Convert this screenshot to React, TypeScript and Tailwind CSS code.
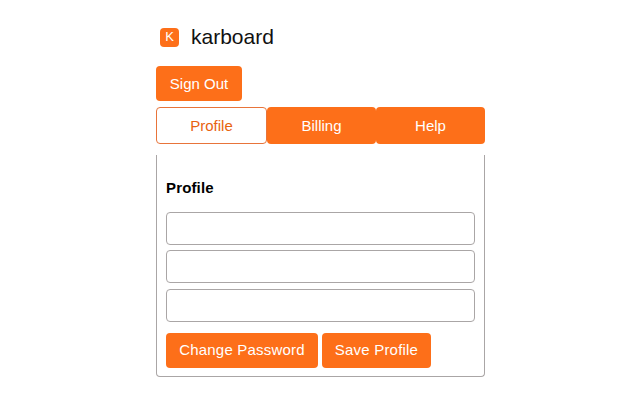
import React from 'react';

const Tab: React.FC<{ label: string; active?: boolean; className?: string }> = ({ label, active, className }) => (
    <button
        className={
            active
                ? `h-[37px] rounded-[4px] border border-[#e8743a] bg-white pt-[1px] text-[15px] text-[#e8620f] ${className}`
                : `h-[37px] rounded-[4px] bg-[#fd6f19] pt-[1px] text-[15px] text-white ${className}`
        }
    >
        {label}
    </button>
);

const Field: React.FC<{ className?: string }> = ({ className }) => (
    <input className={`h-[33px] w-full rounded-[4px] border border-[#aaa6a6] bg-white ${className}`} />
);

export default function App() {
    return (
        <div
            className="h-[400px] w-[640px] overflow-hidden bg-white pl-[156px] pt-[26px]"
            style={{ fontFamily: '"Liberation Sans", Arial, sans-serif' }}
        >
            <div className="flex h-[22px] items-center pl-[4px]">
                <div className="flex h-[19px] w-[19px] items-center justify-center rounded-[4px] bg-[#fd6f19] text-[13px] text-white">
                    K
                </div>
                <span className="ml-[12px] -mt-[2px] text-[21px] leading-none text-[#111]">karboard</span>
            </div>

            <button className="mt-[18px] block h-[35px] w-[86px] rounded-[4px] bg-[#fd6f19] pt-[1px] text-[15px] text-white">
                Sign Out
            </button>

            <div className="mt-[6px] flex w-[329px]">
                <Tab label="Profile" active className="w-[111px]" />
                <Tab label="Billing" className="w-[109px]" />
                <Tab label="Help" className="w-[109px]" />
            </div>

            <div className="mt-[11px] h-[222px] w-[329px] rounded-b-[4px] border-x border-b border-[#aaa6a6] px-[9px] pt-[25px]">
                <h2 className="text-[15px] font-bold leading-[16px] tracking-[0.15px] text-black">Profile</h2>
                <div className="mt-[16px] flex flex-col gap-[5px]">
                    <Field />
                    <Field />
                    <Field className="mt-[1px]" />
                </div>
                <div className="mt-[11px] flex gap-[4px]">
                    <button className="h-[35px] w-[152px] rounded-[4px] bg-[#fd6f19] text-[15px] tracking-[0.2px] text-white">
                        Change Password
                    </button>
                    <button className="h-[35px] w-[109px] rounded-[4px] bg-[#fd6f19] text-[15px] tracking-[0.2px] text-white">
                        Save Profile
                    </button>
                </div>
            </div>
        </div>
    );
}
